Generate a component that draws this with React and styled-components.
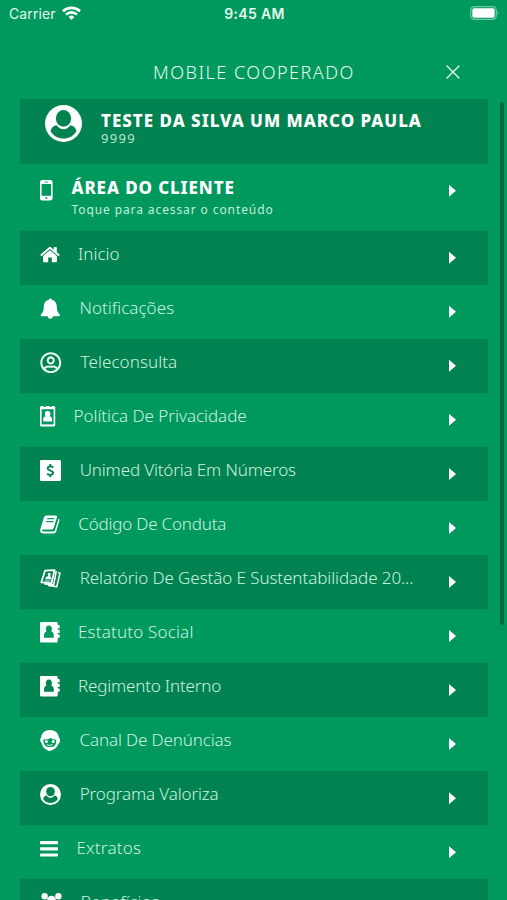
import React from "react";
import styled, { createGlobalStyle } from "styled-components";
import { FaRegUserCircle } from "react-icons/fa";

const green = "#00995d";
const dark = "#008350";

const GlobalStyle = createGlobalStyle`
  * { box-sizing: border-box; }
  html, body { margin: 0; background: ${green}; overflow: hidden; }
  svg { display: block; flex: none; }
`;

const Screen = styled.main`
  position: relative;
  display: flex;
  flex-direction: column;
  width: 507px;
  height: 900px;
  overflow: hidden;
  background: ${green};
  color: #fff;
  font-family: "Noto Sans", "Open Sans", sans-serif;
`;

const StatusBar = styled.div`
  display: grid;
  grid-template-columns: 1fr auto 1fr;
  align-items: center;
  flex: none;
  height: 28px;
  padding: 0 7px 0 9px;
  font: 400 14px/28px Inter, sans-serif;
  color: #e4f8ee;
`;

const Carrier = styled.div`
  display: flex;
  align-items: center;
  gap: 6.5px;
  letter-spacing: 0.1px;
  svg { margin-top: -2px; }
`;

const Clock = styled.time`
  font-weight: 600;
  letter-spacing: 0.35px;
`;

const BatterySlot = styled.div`
  justify-self: end;
  margin-top: -2px;
`;

const TitleBar = styled.header`
  display: grid;
  grid-template-columns: 1fr auto 1fr;
  align-items: center;
  flex: none;
  height: 70.5px;
  padding: 17px 47px 0 48px;
`;

const Title = styled.h1`
  grid-column: 2;
  margin: 0;
  font-size: 18px;
  font-weight: 300;
  line-height: 26px;
  letter-spacing: 1.5px;
  color: #e6faf1;
`;

const CloseButton = styled.button`
  justify-self: end;
  padding: 0;
  border: 0;
  background: none;
`;

const List = styled.div`
  display: flex;
  flex-direction: column;
  flex: none;
  width: 468px;
  margin-left: 20px;
`;

const ProfileCard = styled.section`
  display: flex;
  flex: none;
  height: 65.2px;
  padding: 6.5px 0 0 25px;
  background: ${dark};
`;

const ProfileText = styled.div`
  margin: 4px 0 0 19px;
`;

const Strong = styled.div`
  font-size: 17px;
  font-weight: 800;
  line-height: 23px;
  letter-spacing: ${p => p.$spacing}px;
  white-space: nowrap;
`;

const MemberId = styled.div`
  margin-top: -1px;
  font-size: 13px;
  line-height: 14px;
  letter-spacing: 1.3px;
  color: #b9e5d1;
`;

const ClientRow = styled.section`
  display: flex;
  flex: none;
  height: 67px;
  padding-left: 20px;
`;

const PhoneSlot = styled.div`
  width: 31.5px;
  padding-top: 16px;
`;

const ClientText = styled.div`
  padding-top: 12px;
`;

const Hint = styled.div`
  margin-top: 2px;
  font-size: 12px;
  line-height: 18px;
  letter-spacing: 0.9px;
  color: #c3efdc;
`;

const Row = styled.a`
  display: flex;
  flex: none;
  height: 54.05px;
  padding-left: 20px;
  background: ${p => (p.$dark ? dark : "transparent")};
`;

const IconSlot = styled.span`
  display: flex;
  align-items: center;
  width: ${p => p.$width}px;
  height: 47px;
  flex: none;
`;

const Label = styled.span`
  padding-top: 11px;
  font-size: 17px;
  font-weight: 300;
  line-height: 24px;
  letter-spacing: ${p => p.$spacing}px;
  white-space: nowrap;
  color: #cdf2e1;
`;

const Chevron = styled.span`
  width: 7px;
  height: 12px;
  margin: ${p => p.$top}px 32px 0 auto;
  background: #fff;
  clip-path: polygon(0 0, 100% 50%, 0 100%);
`;

const ScrollThumb = styled.div`
  position: absolute;
  top: 102px;
  left: 499.5px;
  width: 4px;
  height: 523px;
  border-radius: 2px;
  background: #006b42;
`;

const Wifi = () => (
  <svg width="19" height="14" viewBox="0 0 19 14" fill="none" stroke="#fff" strokeWidth="2.6">
    <path d="M1 5.200A12.400 12.400 0 0 1 18 5.200" />
    <path d="M4 8.600A8 8 0 0 1 15 8.600" />
    <path d="M9.500 13.900 6.600 11A4.200 4.200 0 0 1 12.400 11Z" fill="#fff" stroke="none" />
  </svg>
);

const Battery = () => (
  <svg width="30" height="14" viewBox="0 0 30 14">
    <rect x=".7" y=".7" width="25.600" height="12.600" rx="3.700" fill="none" stroke="#72c9a4" strokeWidth="1.200" />
    <rect x="2.300" y="2.300" width="22.400" height="9.400" rx="1.800" fill="#fff" />
    <path d="M27.600 5q1.900 2 0 4z" fill="#72c9a4" />
  </svg>
);

const CloseIcon = () => (
  <svg width="14" height="14" viewBox="0 0 14 14" stroke="#e6faf1" strokeWidth="1.400" strokeLinecap="round">
    <path d="M1 1l12 12M13 1 1 13" />
  </svg>
);

const Person = ({ size, hole }) => (
  <svg width={size} height={size} viewBox="0 0 37 37">
    <circle cx="18.5" cy="18.5" r="18.5" fill="#fff" />
    <path
      fill={hole}
      d="M5.600 26.300C6.200 22.500 9 20.600 11.600 20.300 15.500 25.700 21.500 25.700 25.400 20.300 28 20.600 30.800 22.500 31.400 26.300 28.500 31 23.800 33.600 18.500 33.600 13.200 33.600 8.500 31 5.600 26.300Z"
    />
    <ellipse cx="18.5" cy="13.400" rx="7.600" ry="8.300" fill={hole} />
  </svg>
);

const Phone = () => (
  <svg width="13" height="21" viewBox="0 0 13 21">
    <rect width="12.600" height="20.600" rx="2.300" fill="#fff" />
    <path d="M1.600 4h9.400v11.800H1.600z" fill={green} />
    <path d="M4.500 2.100h3.600" stroke={green} strokeWidth=".8" />
    <circle cx="6.300" cy="18.100" r="1" fill={green} />
  </svg>
);

const Home = () => (
  <svg width="20" height="17" viewBox="0 0 20 17" fill="#fff">
    <path d="M3.100 10 10 4.300 16.900 10v5.500q0 .8-.8.8h-4.300v-4.800H8.200v4.800H3.900q-.8 0-.8-.8z" />
    <path d="M.5 8.500 9 1.300q1-.8 2 0l2.800 2.400V1.400q0-.5.5-.5h2q.5 0 .5.5v4.800l2.700 2.300q.3.300 0 .7l-.7.8q-.3.300-.6 0L10 3 1.800 10q-.3.300-.6 0l-.7-.8q-.3-.4 0-.7z" />
  </svg>
);

const Bell = () => (
  <svg width="21" height="21" viewBox="0 0 21 21" fill="#fff">
    <path d="M10.300.2q1.300 0 1.300 1.500C15.200 2.400 16.800 5.200 16.800 8.600c0 4.500 1.200 6.600 3.200 8.100q0 1.500-1.500 1.500h-5.700a2.500 2.500 0 0 1-5 0H2.100Q.6 18.200.6 16.700C2.600 15.200 3.800 13.100 3.800 8.600c0-3.400 1.600-6.200 5.200-6.900Q9 .2 10.300.2z" />
  </svg>
);

const Badge = () => (
  <svg width="16" height="21" viewBox="0 0 16 21">
    <path d="M1.400 0h2.200v.9h2.200V0h3.600v.9h2.200V0h2.200q1.400 0 1.400 1.400v17.800q0 1.300-1.400 1.300H1.400Q0 20.500 0 19.200V1.400Q0 0 1.400 0z" fill="#fff" />
    <path d="M1.600 3.200h12v15.200h-12z" fill={green} />
    <ellipse cx="7.600" cy="8" rx="2.800" ry="3.100" fill="#fff" />
    <path d="M3.200 15.600v-2.200q0-3 3-3.100h2.800q3 .1 3 3.100v2.200z" fill="#fff" />
  </svg>
);

const Dollar = () => (
  <svg width="21" height="21" viewBox="0 0 21 21">
    <rect width="21" height="21" rx="1.300" fill="#fff" />
    <path
      d="M13.200 7.500Q12 6.400 10.200 6.400 7.700 6.500 7.700 8.400c0 2.500 5.400 1.800 5.400 4.400 0 1.400-1.100 2.100-2.900 2.100Q8.500 14.900 7.100 13.800M10.300 4v2.500M10.300 14.700V17.200"
      fill="none"
      stroke={dark}
      strokeWidth="1.900"
    />
  </svg>
);

const Book = () => (
  <svg width="20" height="19" viewBox="0 0 20 19">
    <path d="M6.300.5h9.500q1.700 0 1.200 1.700L13.600 13q-.5 1.500-2 1.500H3.100q-1 0-1 .9 0 1.100 1.400 1.100h10q1 0 1.400-1.200l3.600-11.600q1.300.4.9 1.700L16.200 16.500Q15.500 18.600 13.500 18.600H3.500Q.2 18.600.2 15.600.2 14.300.8 12.500L3.900 2.400Q4.500.5 6.300.5z" fill="#fff" />
    <path d="M7.200 3.700h7M6.300 6.600h7" stroke={green} strokeWidth="1.200" />
  </svg>
);

const Cards = () => (
  <svg width="21" height="19" viewBox="0 0 21 19" fill="none" stroke="#fff" strokeLinejoin="round">
    <path d="M5 1.700 14.600 1.100 11.500 14.300 1.300 13.300z" strokeWidth="1.800" />
    <path d="M16.300 2 13.600 16 4.500 14.900M18 3.400l2 .7-3.300 13.600L8 16.400" strokeWidth="1.500" />
    <ellipse cx="9.200" cy="5.400" rx="1.500" ry="1.700" fill="#fff" stroke="none" />
    <path d="M5.200 10.200q.6-3.300 3.600-3.200 3 .2 2.500 3.200z" fill="#fff" stroke="none" />
    <path d="M4.500 12h6" strokeWidth=".9" />
  </svg>
);

const Contacts = ({ hole }) => (
  <svg width="20" height="21" viewBox="0 0 20 21">
    <path d="M1.300 0h15.200q1.200 0 1.200 1.200v1.900h1.400q.6 0 .6.600v2q0 .6-.6.600h-1.400v1.500h1.400q.6 0 .6.600v2q0 .6-.6.600h-1.400v1.500h1.400q.6 0 .6.600v2q0 .6-.6.600h-1.400v3.500q0 1.300-1.200 1.300H1.300Q0 20.500 0 19.200V1.300Q0 0 1.300 0z" fill="#fff" />
    <ellipse cx="8.900" cy="7" rx="3" ry="3.500" fill={hole} />
    <path d="M4 15.300v-1.700q.1-3.700 2.900-4 2 1.500 4 0 2.800.3 2.900 4v1.700q0 .5-.6.500H4.600q-.6 0-.6-.5z" fill={hole} />
  </svg>
);

const Agent = () => (
  <svg width="21" height="21" viewBox="0 0 21 21">
    <path d="M10 0c5 0 8.600 3 8.900 7.600q1.200.6 1.100 2.900-.1 2.600-1.400 3.100-.8 3.100-3.800 5.200-1.600 1.400-4 1.600-1.200.8-2.600 0-2.900-.6-4.800-3.200-1.400-1.800-1.700-4Q.3 12.300.2 10q0-2 .9-2.500C1.400 3 5 0 10 0z" fill="#fff" />
    <path d="M3.300 9.400q4.800.3 7.200-1.500 2.300 1.700 5.700 1.900.4 3.200-1.200 5.600-2 1.800-4.300 1.600-4.600.4-6.500-2.800-.9-2-.9-4.800z" fill={green} />
    <circle cx="6.400" cy="11.600" r="1.500" fill="#fff" />
    <circle cx="13.200" cy="11.600" r="1.500" fill="#fff" />
    <path d="M6.700 14.900q3 1 5.900-.2" stroke="#fff" strokeWidth=".9" fill="none" />
    <path d="M17.700 12.500q-1.200 5.300-7 6.200" stroke="#fff" strokeWidth="1.200" fill="none" />
    <ellipse cx="9.200" cy="19.200" rx="2" ry="1.500" fill="#fff" />
  </svg>
);

const Bars = () => (
  <svg width="18" height="16" viewBox="0 0 18 16" fill="#fff">
    <rect width="18" height="3.200" rx=".8" />
    <rect y="6.200" width="18" height="3.200" rx=".8" />
    <rect y="12.400" width="18" height="3.200" rx=".8" />
  </svg>
);

const Group = () => (
  <svg width="23" height="20" viewBox="0 0 23 20" fill="#fff">
    <circle cx="4.600" cy="3.200" r="3.200" />
    <circle cx="18.400" cy="3.200" r="3.200" />
    <circle cx="11.500" cy="7.200" r="4.400" />
    <path d="M0 11V9.500Q0 6.700 2 7q2.500 1.500 4.500.3 0 2.500 1.200 4.200H1.500Q0 11.500 0 11zM23 11V9.500Q23 6.700 21 7q-2.500 1.500-4.500.3 0 2.500-1.200 4.200h6.200q1.500 0 1.500-.5zM4.500 17q0-4.500 3.300-5.200 3.700 2 7.400 0 3.300.7 3.300 5.200 0 3-3 3h-8q-3 0-3-3z" />
  </svg>
);

const items = [
  { label: "Inicio", icon: <Home />, slot: 38, spacing: 0 },
  { label: "Notificações", icon: <Bell />, slot: 39.5, spacing: 0.05 },
  { label: "Teleconsulta", icon: <FaRegUserCircle size={21.5} color="#e6faf1" />, slot: 40.5, spacing: 0.08 },
  { label: "Política De Privacidade", icon: <Badge />, slot: 33.5, spacing: -0.03 },
  { label: "Unimed Vitória Em Números", icon: <Dollar />, slot: 39.7, spacing: -0.15 },
  { label: "Código De Conduta", icon: <Book />, slot: 38.3, spacing: -0.2 },
  { label: "Relatório De Gestão E Sustentabilidade 20...", icon: <Cards />, slot: 39.7, spacing: -0.08 },
  { label: "Estatuto Social", icon: <Contacts hole={green} />, slot: 38, spacing: 0.18 },
  { label: "Regimento Interno", icon: <Contacts hole={dark} />, slot: 38, spacing: -0.18 },
  { label: "Canal De Denúncias", icon: <Agent />, slot: 39.5, spacing: -0.13 },
  { label: "Programa Valoriza", icon: <Person size={21} hole={dark} />, slot: 39.7, spacing: -0.13 },
  { label: "Extratos", icon: <Bars />, slot: 36.5, spacing: 0.2 },
  { label: "Benefícios", icon: <Group />, slot: 40.5, spacing: 0 },
];

export default function App() {
  return (
    <Screen>
      <GlobalStyle />
      <StatusBar>
        <Carrier>Carrier<Wifi /></Carrier>
        <Clock>9:45 AM</Clock>
        <BatterySlot><Battery /></BatterySlot>
      </StatusBar>
      <TitleBar>
        <Title>MOBILE COOPERADO</Title>
        <CloseButton aria-label="Fechar"><CloseIcon /></CloseButton>
      </TitleBar>
      <List>
        <ProfileCard>
          <Person size={37} hole={dark} />
          <ProfileText>
            <Strong $spacing={0.98}>TESTE DA SILVA UM MARCO PAULA</Strong>
            <MemberId>9999</MemberId>
          </ProfileText>
        </ProfileCard>
        <ClientRow>
          <PhoneSlot><Phone /></PhoneSlot>
          <ClientText>
            <Strong $spacing={0.88}>ÁREA DO CLIENTE</Strong>
            <Hint>Toque para acessar o conteúdo</Hint>
          </ClientText>
          <Chevron $top={21} />
        </ClientRow>
        {items.map((item, i) => (
          <Row key={item.label} $dark={i % 2 === 0}>
            <IconSlot $width={item.slot}>{item.icon}</IconSlot>
            <Label $spacing={item.spacing}>{item.label}</Label>
            <Chevron $top={21} />
          </Row>
        ))}
      </List>
      <ScrollThumb />
    </Screen>
  );
}
